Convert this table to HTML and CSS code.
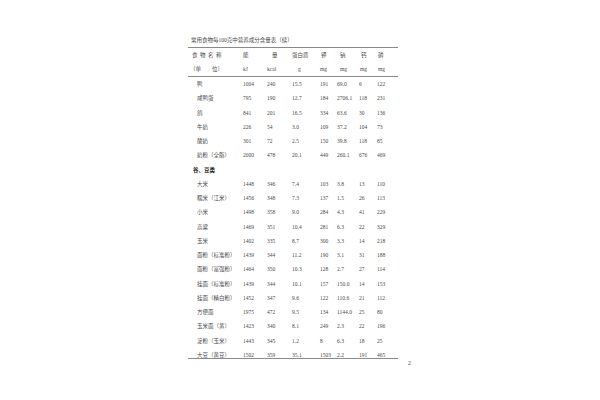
FILE: index.html
```html
<!DOCTYPE html>
<html lang="zh">
<head>
<meta charset="utf-8">
<title>常用食物每100克中营养成分含量表（续）</title>
<link rel="stylesheet" href="styles.css">
</head>
<body>
<div class="sheet">
  <div class="title">常用食物每100克中营养成分含量表（续）</div>
  <div class="thead">
    <div class="row hrow">
      <span class="h-name">食物名称</span>
      <span>能</span>
      <span class="pl5">量</span>
      <span>蛋白质</span>
      <span class="pl1">钾</span>
      <span class="pl3">钠</span>
      <span class="pl2">钙</span>
      <span class="pl1">磷</span>
    </div>
    <div class="row hrow">
      <span class="h-unit">（单　　位）</span>
      <span>kJ</span>
      <span>kcal</span>
      <span class="pl6">g</span>
      <span>mg</span>
      <span class="pl3">mg</span>
      <span class="pl1">mg</span>
      <span class="pl1">mg</span>
    </div>
  </div>
  <div class="tbody">
    <div class="row"><span class="name">鸭</span><span>1004</span><span>240</span><span>15.5</span><span>191</span><span>69.0</span><span>6</span><span>122</span></div>
    <div class="row"><span class="name">咸鸭蛋</span><span>795</span><span>190</span><span>12.7</span><span>184</span><span>2706.1</span><span>118</span><span>231</span></div>
    <div class="row"><span class="name">鸽</span><span>841</span><span>201</span><span>16.5</span><span>334</span><span>63.6</span><span>30</span><span>136</span></div>
    <div class="row"><span class="name">牛奶</span><span>226</span><span>54</span><span>3.0</span><span>109</span><span>37.2</span><span>104</span><span>73</span></div>
    <div class="row"><span class="name">酸奶</span><span>301</span><span>72</span><span>2.5</span><span>150</span><span>39.8</span><span>118</span><span>85</span></div>
    <div class="row"><span class="name">奶粉（全脂）</span><span>2000</span><span>478</span><span>20.1</span><span>449</span><span>260.1</span><span>676</span><span>469</span></div>
    <div class="row section"><span class="sec">谷、豆类</span></div>
    <div class="row"><span class="name">大米</span><span>1448</span><span>346</span><span>7.4</span><span>103</span><span>3.8</span><span>13</span><span>110</span></div>
    <div class="row"><span class="name">糯米（江米）</span><span>1456</span><span>348</span><span>7.3</span><span>137</span><span>1.5</span><span>26</span><span>113</span></div>
    <div class="row"><span class="name">小米</span><span>1498</span><span>358</span><span>9.0</span><span>284</span><span>4.3</span><span>41</span><span>229</span></div>
    <div class="row"><span class="name">高粱</span><span>1469</span><span>351</span><span>10.4</span><span>281</span><span>6.3</span><span>22</span><span>329</span></div>
    <div class="row"><span class="name">玉米</span><span>1402</span><span>335</span><span>8.7</span><span>300</span><span>3.3</span><span>14</span><span>218</span></div>
    <div class="row"><span class="name">面粉（标准粉）</span><span>1439</span><span>344</span><span>11.2</span><span>190</span><span>3.1</span><span>31</span><span>188</span></div>
    <div class="row"><span class="name">面粉（富强粉）</span><span>1464</span><span>350</span><span>10.3</span><span>128</span><span>2.7</span><span>27</span><span>114</span></div>
    <div class="row"><span class="name">挂面（标准粉）</span><span>1439</span><span>344</span><span>10.1</span><span>157</span><span>150.0</span><span>14</span><span>153</span></div>
    <div class="row"><span class="name">挂面（精白粉）</span><span>1452</span><span>347</span><span>9.6</span><span>122</span><span>110.6</span><span>21</span><span>112</span></div>
    <div class="row"><span class="name">方便面</span><span>1975</span><span>472</span><span>9.5</span><span>134</span><span>1144.0</span><span>25</span><span>80</span></div>
    <div class="row"><span class="name">玉米面（黄）</span><span>1423</span><span>340</span><span>8.1</span><span>249</span><span>2.3</span><span>22</span><span>196</span></div>
    <div class="row"><span class="name">淀粉（玉米）</span><span>1443</span><span>345</span><span>1.2</span><span>8</span><span>6.3</span><span>18</span><span>25</span></div>
    <div class="row last"><span class="name">大豆（黄豆）</span><span>1502</span><span>359</span><span>35.1</span><span>1503</span><span>2.2</span><span>191</span><span>465</span></div>
  </div>
  <div class="pageno">2</div>
</div>
</body>
</html>
```
FILE: styles.css
```css
html, body {
  margin: 0;
  padding: 0;
  background: #ffffff;
}

body {
  font-family: "Liberation Serif", "Noto Sans CJK SC", serif;
  color: #4a4a4a;
  font-size: 5.5px;
}

.sheet {
  margin-left: 188px;
  padding-top: 36px;
  width: 210px;
}

.title {
  padding-left: 3px;
  line-height: 8px;
  height: 8px;
  margin-bottom: 3px;
  white-space: nowrap;
}

.thead {
  border-top: 1px solid #8a8a8a;
  border-bottom: 1px solid #8a8a8a;
}

.row {
  display: grid;
  grid-template-columns: 55px 24px 25px 28px 17px 22px 18px 21px;
  height: 14.26px;
  line-height: 14.26px;
  white-space: nowrap;
}

.hrow {
  height: 14px;
  line-height: 14px;
}

.h-name {
  padding-left: 4px;
  letter-spacing: 2.5px;
}

.h-unit {
  padding-left: 2px;
}

.name {
  padding-left: 9px;
}

.section .sec {
  grid-column: 1 / -1;
  padding-left: 5px;
  font-weight: bold;
  color: #222222;
}

.tbody {
  border-bottom: 1px solid #8a8a8a;
}

.row.last {
  height: 10px;
}

.pl1 { padding-left: 1px; }
.pl2 { padding-left: 2px; }
.pl3 { padding-left: 3px; }
.pl5 { padding-left: 5px; }
.pl6 { padding-left: 6px; }

.pageno {
  margin-top: 1px;
  padding-left: 220px;
  line-height: 6px;
  height: 6px;
}
```
